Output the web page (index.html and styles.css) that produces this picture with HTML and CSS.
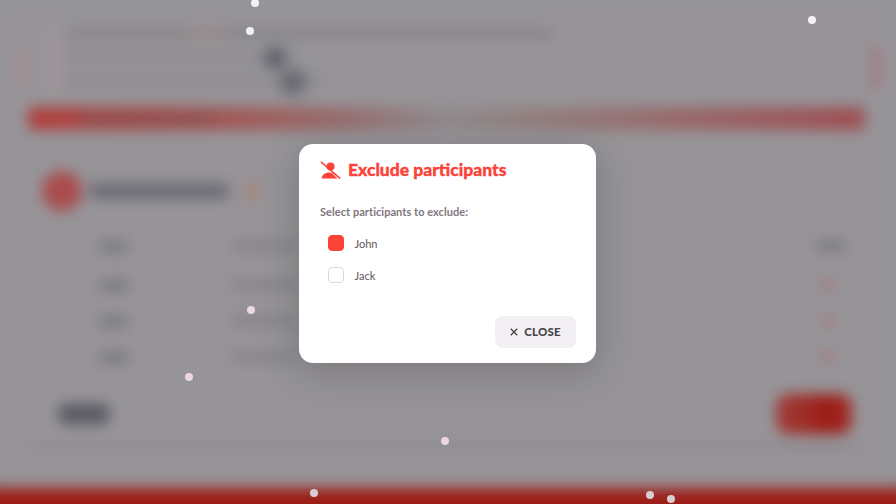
FILE: index.html
```html
<!DOCTYPE html>
<html lang="en">
<head>
<meta charset="utf-8">
<title>Exclude participants</title>
<link rel="stylesheet" href="styles.css">
</head>
<body>
<div class="stage">
  <div class="backdrop" aria-hidden="true">
    <section class="notice">
      <div class="strips"><i class="strip"></i><i class="strip strip-b"></i></div>
      <div class="lines">
        <div class="line line-1"><i class="tint"></i></div>
        <div class="line line-2"><i class="blob"></i></div>
        <div class="line line-3"><i class="blob"></i></div>
      </div>
      <i class="strip strip-right"></i>
    </section>
    <div class="progress"><i class="progress-text"></i></div>
    <section class="card">
      <div class="card-head"><i class="avatar"></i><i class="card-title"></i><i class="card-dot"></i></div>
      <div class="row row-head"><i class="c1"></i><i class="c2"></i><i class="c3"></i></div>
      <div class="row"><i class="c1"></i><i class="c2"></i><i class="c3 red"></i></div>
      <div class="row"><i class="c1"></i><i class="c2"></i><i class="c3 red"></i></div>
      <div class="row"><i class="c1"></i><i class="c2"></i><i class="c3 red"></i></div>
      <div class="card-foot"><i class="btn-grey"></i><i class="btn-red"></i></div>
    </section>
    <div class="rule"></div>
    <div class="footer"></div>
  </div>

  <i class="dot" style="left:255px;top:3px"></i>
  <i class="dot" style="left:250px;top:31px"></i>
  <i class="dot" style="left:812px;top:20px"></i>
  <i class="dot pink" style="left:251px;top:310px"></i>
  <i class="dot pink" style="left:189px;top:377px"></i>
  <i class="dot pink" style="left:445px;top:441px"></i>
  <i class="dot dim" style="left:314px;top:493px"></i>
  <i class="dot dim" style="left:650px;top:495px"></i>
  <i class="dot dim" style="left:671px;top:499px"></i>

  <div class="overlay">
    <div class="modal" role="dialog" aria-labelledby="modal-title">
      <h2 class="modal-title" id="modal-title">
        <svg class="title-icon" viewBox="0 0 21 18" width="21" height="18" aria-hidden="true">
          <circle cx="10.5" cy="5.6" r="4"/>
          <path d="M1.6 17.4c0-3.6 3.6-6 7.4-6 1 0 2 .2 2.9.5l5.5 5.5z"/>
          <path class="slash" d="M1 .8 20.2 17.6"/>
        </svg>
        <span>Exclude participants</span>
      </h2>
      <p class="modal-desc">Select participants to exclude:</p>
      <ul class="options">
        <li class="option"><span class="box checked"></span><span>John</span></li>
        <li class="option"><span class="box"></span><span>Jack</span></li>
      </ul>
      <div class="modal-actions">
        <button class="close-btn" type="button">
          <svg viewBox="0 0 10 10" width="8" height="8" aria-hidden="true"><path d="M1 1 9 9M9 1 1 9"/></svg>
          <span>CLOSE</span>
        </button>
      </div>
    </div>
  </div>
</div>
</body>
</html>
```

FILE: styles.css
```css
* { box-sizing: border-box; }
html, body { margin: 0; height: 100%; overflow: hidden; }
body { background: #969498; font-family: "Lato", "Open Sans", sans-serif; }

.stage { position: relative; width: 896px; height: 504px; overflow: hidden; }

/* blurred page behind the dialog; taller than the stage so the footer stays solid at the edge */
.backdrop {
  height: 530px;
  display: flex;
  flex-direction: column;
  background: #969498;
  filter: blur(7px);
}
.backdrop i { display: block; }

.notice { display: flex; height: 78px; margin-top: 17px; padding: 0 16px 0 18px; }
.strips { display: flex; gap: 24px; }
.strip { width: 8px; height: 36px; margin-top: 32px; background: #a78a8f; }
.strip-b { width: 8px; height: 64px; margin-top: 12px; background: #a5949a; }
.strip-right { width: 10px; height: 42px; margin-top: 30px; background: #a27b81; }
.lines { flex: 1; display: flex; flex-direction: column; gap: 15px; padding: 12px 0 0 10px; }
.line { height: 9px; background: #868488; display: flex; justify-content: flex-end; align-items: center; }
.line-1 { width: 485px; justify-content: flex-start; padding-left: 122px; }
.line-2 { width: 230px; background: #8c8a8e; }
.line-3 { width: 256px; background: #8c8a8e; }
.tint { width: 32px; height: 7px; background: #a08686; }
.blob { width: 22px; height: 22px; border-radius: 50%; background: #5f5e69; flex: none; }
.line-2 .blob { margin-right: 12px; }
.line-3 .blob { margin-right: 18px; width: 26px; height: 26px; background: #696872; }

.progress {
  display: flex;
  align-items: center;
  height: 23px;
  margin: 12px 31px 0 28px;
  padding-left: 52px;
  border-radius: 6px;
  background: linear-gradient(90deg, #b03f3b 0, #a5514e 20%, #976d6e 38%, #908a8d 50%, #928280 58%, #98686a 78%, #9e4e52 100%);
}
.progress-text { width: 135px; height: 6px; background: #7e5258; }

.card { display: flex; flex-direction: column; padding: 0 46px 0 42px; margin-top: 41px; }
.card-head { display: flex; align-items: center; height: 40px; }
.avatar { width: 40px; height: 40px; border-radius: 50%; background: #aa4c4d; }
.card-title { width: 138px; height: 14px; margin-left: 8px; background: #676570; }
.card-dot { width: 16px; height: 20px; margin-left: 16px; border-radius: 50%; background: #a4857a; }

.row { display: flex; align-items: center; height: 36px; padding-left: 58px; }
.row-head { margin: 17px 0 3px; height: 36px; }
.c1 { width: 28px; height: 11px; background: #7a7880; }
.c2 { width: 64px; height: 10px; margin-left: 104px; background: #858388; }
.c3 { width: 30px; height: 10px; margin-left: auto; margin-right: 4px; background: #7a7880; }
.c3.red { width: 15px; height: 10px; margin-right: 15px; background: #a37b81; }

.card-foot { display: flex; justify-content: space-between; align-items: center; margin-top: 19px; padding-left: 16px; }
.btn-grey { width: 52px; height: 20px; border-radius: 8px; background: #5a5862; }
.btn-red { width: 76px; height: 40px; margin-right: -2px; border-radius: 12px; background: linear-gradient(90deg, #9f3f3b, #9c1b14 70%, #a0302c); }

.rule { height: 3px; margin: 12px 34px 0 30px; background: #807e83; }
.footer { height: 42px; margin: auto -14px 0; background: #9c1d16; }

/* particles */
.dot {
  position: absolute;
  width: 8px;
  height: 8px;
  margin: -4px 0 0 -4px;
  border-radius: 50%;
  background: #f4f2f4;
}
.dot.pink { background: #ecd9de; }
.dot.dim { background: #d9ccd2; }

/* dialog */
.overlay { position: absolute; inset: 0; display: flex; justify-content: center; align-items: flex-start; padding: 144px 1px 0 0; }
.modal {
  width: 297px;
  height: 219px;
  padding: 16px 21px;
  display: flex;
  flex-direction: column;
  background: #fff;
  border-radius: 14px;
  box-shadow: 0 8px 36px rgba(60, 50, 55, .3);
}
.modal-title {
  display: flex;
  align-items: center;
  gap: 7px;
  height: 20px;
  margin: 0;
  color: #fb4339;
  font-size: 17.5px;
  font-weight: 900;
  line-height: 20px;
  -webkit-text-stroke: .35px #fb4339;
}
.title-icon { flex: none; fill: #fb4339; }
.title-icon .slash { fill: none; stroke: #fb4339; stroke-width: 1.6; }
.modal-desc { margin: 25px 0 0; color: #7f767e; font-size: 11px; font-weight: 700; line-height: 14px; letter-spacing: .05px; }
.options { list-style: none; margin: 8px 0 0 8px; padding: 0; display: flex; flex-direction: column; }
.option { display: flex; align-items: center; gap: 10.5px; height: 32px; color: #5d565c; font-size: 11px; }
.box { width: 16px; height: 16px; border: 1px solid #e6d6da; border-radius: 4px; background: #fff; }
.box.checked { border-color: #fb4339; background: #fb4339; }
.modal-actions { margin: auto -1px -1px 0; display: flex; justify-content: flex-end; }
.close-btn {
  display: flex;
  align-items: center;
  justify-content: center;
  gap: 6px;
  width: 81px;
  height: 32px;
  padding: 0 0 2px;
  border: 0;
  border-radius: 8px;
  background: #f2f0f2;
  color: #48444a;
  font: 900 11.5px "Lato", "Open Sans", sans-serif;
  letter-spacing: .2px;
}
.close-btn svg { stroke: #48444a; stroke-width: 1.7; fill: none; margin-top: 2px; }
```
